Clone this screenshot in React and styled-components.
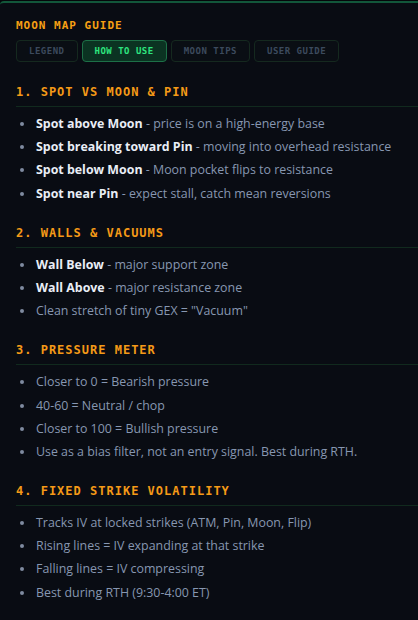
import React from "react";
import styled, { createGlobalStyle } from "styled-components";

const Global = createGlobalStyle`
  html, body { margin: 0; padding: 0; background: #05070b; }
  body { font-family: "Open Sans", "Noto Sans", sans-serif; }
  * { box-sizing: border-box; }
`;

const Panel = styled.div`
  margin-top: 1px;
  min-height: 619px;
  background: #090c13;
  border-top: 2px solid #12573a;
  border-top-left-radius: 4px;
  padding: 16px 0 20px 16px;
  overflow: hidden;
`;

const Title = styled.h1`
  margin: 0;
  font-family: "DejaVu Sans Mono", "Liberation Mono", monospace;
  font-weight: bold;
  font-size: 11px;
  line-height: 14px;
  letter-spacing: 1px;
  color: #f7a014;
`;

const Tabs = styled.div`
  display: flex;
  gap: 4px;
  margin-top: 7px;
`;

const Tab = styled.button`
  height: 22px;
  padding: 0 12px;
  border-radius: 4px;
  font-family: "DejaVu Sans Mono", "Liberation Mono", monospace;
  font-weight: bold;
  font-size: 9px;
  letter-spacing: 0.5px;
  cursor: pointer;
  border: 1px solid ${(p) => (p.$active ? "#1d7047" : "#15291f")};
  background: ${(p) => (p.$active ? "#0b3322" : "#0a0e14")};
  color: ${(p) => (p.$active ? "#2ee57f" : "#3c4a5d")};
`;

const Section = styled.section`
  margin-top: ${(p) => (p.$first ? "22px" : "21.2px")};
`;

const Heading = styled.h2`
  margin: 0;
  padding-bottom: 6px;
  border-bottom: 1px solid #112a1e;
  font-family: "DejaVu Sans Mono", "Liberation Mono", monospace;
  font-weight: bold;
  font-size: 12px;
  line-height: 16px;
  letter-spacing: 1px;
  color: #f59a17;
`;

const List = styled.ul`
  list-style: none;
  margin: 7px 0 0;
  padding: 0;
  display: flex;
  flex-direction: column;
  gap: 3.2px;
`;

const Item = styled.li`
  position: relative;
  padding-left: 20px;
  font-size: 12.4px;
  line-height: 20px;
  color: #8797b1;
  white-space: nowrap;
  &::before {
    content: "";
    position: absolute;
    left: 4px;
    top: 8px;
    width: 4px;
    height: 4px;
    border-radius: 50%;
    background: #7f8ba0;
  }
`;

const Strong = styled.b`
  font-weight: 700;
  color: #e9eef6;
`;

const sections = [
  {
    title: "1. SPOT VS MOON & PIN",
    items: [
      ["Spot above Moon", "price is on a high-energy base"],
      ["Spot breaking toward Pin", "moving into overhead resistance"],
      ["Spot below Moon", "Moon pocket flips to resistance"],
      ["Spot near Pin", "expect stall, catch mean reversions"],
    ],
  },
  {
    title: "2. WALLS & VACUUMS",
    items: [
      ["Wall Below", "major support zone"],
      ["Wall Above", "major resistance zone"],
      [null, 'Clean stretch of tiny GEX = "Vacuum"'],
    ],
  },
  {
    title: "3. PRESSURE METER",
    items: [
      [null, "Closer to 0 = Bearish pressure"],
      [null, "40-60 = Neutral / chop"],
      [null, "Closer to 100 = Bullish pressure"],
      [null, "Use as a bias filter, not an entry signal. Best during RTH."],
    ],
  },
  {
    title: "4. FIXED STRIKE VOLATILITY",
    items: [
      [null, "Tracks IV at locked strikes (ATM, Pin, Moon, Flip)"],
      [null, "Rising lines = IV expanding at that strike"],
      [null, "Falling lines = IV compressing"],
      [null, "Best during RTH (9:30-4:00 ET)"],
    ],
  },
];

const tabs = ["LEGEND", "HOW TO USE", "MOON TIPS", "USER GUIDE"];

export default function App() {
  return (
    <>
      <Global />
      <Panel>
        <Title>MOON MAP GUIDE</Title>
        <Tabs>
          {tabs.map((t) => (
            <Tab key={t} $active={t === "HOW TO USE"}>
              {t}
            </Tab>
          ))}
        </Tabs>
        {sections.map((s, i) => (
          <Section key={s.title} $first={i === 0}>
            <Heading>{s.title}</Heading>
            <List>
              {s.items.map(([b, t], j) => (
                <Item key={j}>
                  {b ? (
                    <>
                      <Strong>{b}</Strong> - {t}
                    </>
                  ) : (
                    t
                  )}
                </Item>
              ))}
            </List>
          </Section>
        ))}
      </Panel>
    </>
  );
}
